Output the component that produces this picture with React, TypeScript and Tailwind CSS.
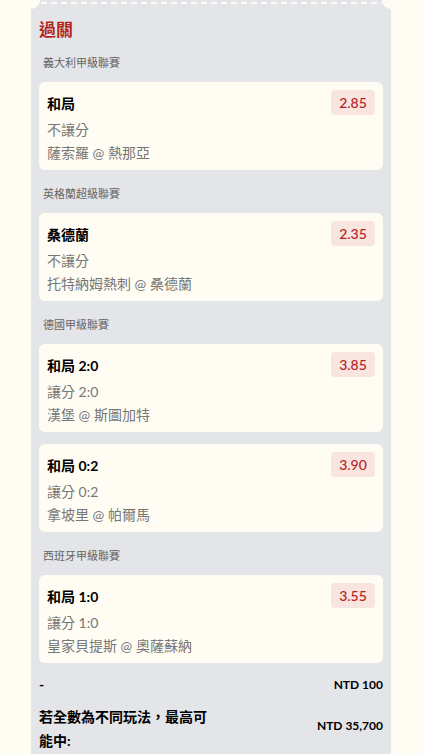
import React from 'react'

interface Pick {
  name: string
  handicap: string
  match: string
  odds: string
}

interface League {
  league: string
  picks: Pick[]
}

const leagues: League[] = [
  {
    league: '義大利甲級聯賽',
    picks: [{ name: '和局', handicap: '不讓分', match: '薩索羅 @ 熱那亞', odds: '2.85' }],
  },
  {
    league: '英格蘭超級聯賽',
    picks: [{ name: '桑德蘭', handicap: '不讓分', match: '托特納姆熱刺 @ 桑德蘭', odds: '2.35' }],
  },
  {
    league: '德國甲級聯賽',
    picks: [
      { name: '和局 2:0', handicap: '讓分 2:0', match: '漢堡 @ 斯圖加特', odds: '3.85' },
      { name: '和局 0:2', handicap: '讓分 0:2', match: '拿坡里 @ 帕爾馬', odds: '3.90' },
    ],
  },
  {
    league: '西班牙甲級聯賽',
    picks: [{ name: '和局 1:0', handicap: '讓分 1:0', match: '皇家貝提斯 @ 奧薩蘇納', odds: '3.55' }],
  },
]

function PickCard({ pick }: { pick: Pick }) {
  return (
    <div className="rounded-md bg-[#fffdf3] px-2 pt-2 pb-[6px]">
      <div className="flex h-[25px] items-center justify-between">
        <span className="pt-[3px] text-[14px] font-bold leading-5 text-black">{pick.name}</span>
        <span className="flex h-[25px] w-[44px] items-center justify-center rounded bg-[#f8e5df] text-[14px] font-medium leading-none text-[#b82228]">
          {pick.odds}
        </span>
      </div>
      <div className="mt-[3px] text-[14px] leading-[23px] text-[#777777]">
        <div>{pick.handicap}</div>
        <div>{pick.match}</div>
      </div>
    </div>
  )
}

export default function App() {
  return (
    <div className="min-h-screen bg-[#fffdf3] font-['Lato','Noto_Sans_CJK_TC',sans-serif]">
      <div className="relative ml-[31px] w-[360px] bg-[#e4e5e8] px-2 pt-[18px] pb-[2px]">
        {/* ticket notches + tear line */}
        <div className="absolute -left-[9px] -top-[9px] h-[18px] w-[18px] rounded-full bg-[#fffdf3]" />
        <div className="absolute -right-[9px] -top-[9px] h-[18px] w-[18px] rounded-full bg-[#fffdf3]" />
        <div className="absolute left-[10px] right-[9px] top-[2px] h-[2px] bg-[repeating-linear-gradient(90deg,#fffdf3_0_6px,transparent_6px_10px)]" />

        <h2 className="text-[17px] font-bold leading-6 text-[#b3261e]">過關</h2>

        {leagues.map((l, i) => (
          <div key={l.league} className={i === 0 ? 'mt-[13px]' : 'mt-4'}>
            <div className="px-1 text-[11px] leading-4 text-[#666666]">{l.league}</div>
            <div className="mt-[11px] flex flex-col gap-3">
              {l.picks.map((p) => (
                <PickCard key={p.match} pick={p} />
              ))}
            </div>
          </div>
        ))}

        {/* Summary */}
        <div className="mt-3 flex items-center justify-between leading-5">
          <span className="text-[14px] font-bold text-black">-</span>
          <span className="text-[12px] font-bold text-black">NTD 100</span>
        </div>
        <div className="mt-[10px] flex items-center justify-between">
          <span className="w-1/2 text-[14px] font-bold leading-6 text-black">若全數為不同玩法，最高可能中:</span>
          <span className="pb-[6px] text-[12px] font-bold text-black">NTD 35,700</span>
        </div>
      </div>
    </div>
  )
}
